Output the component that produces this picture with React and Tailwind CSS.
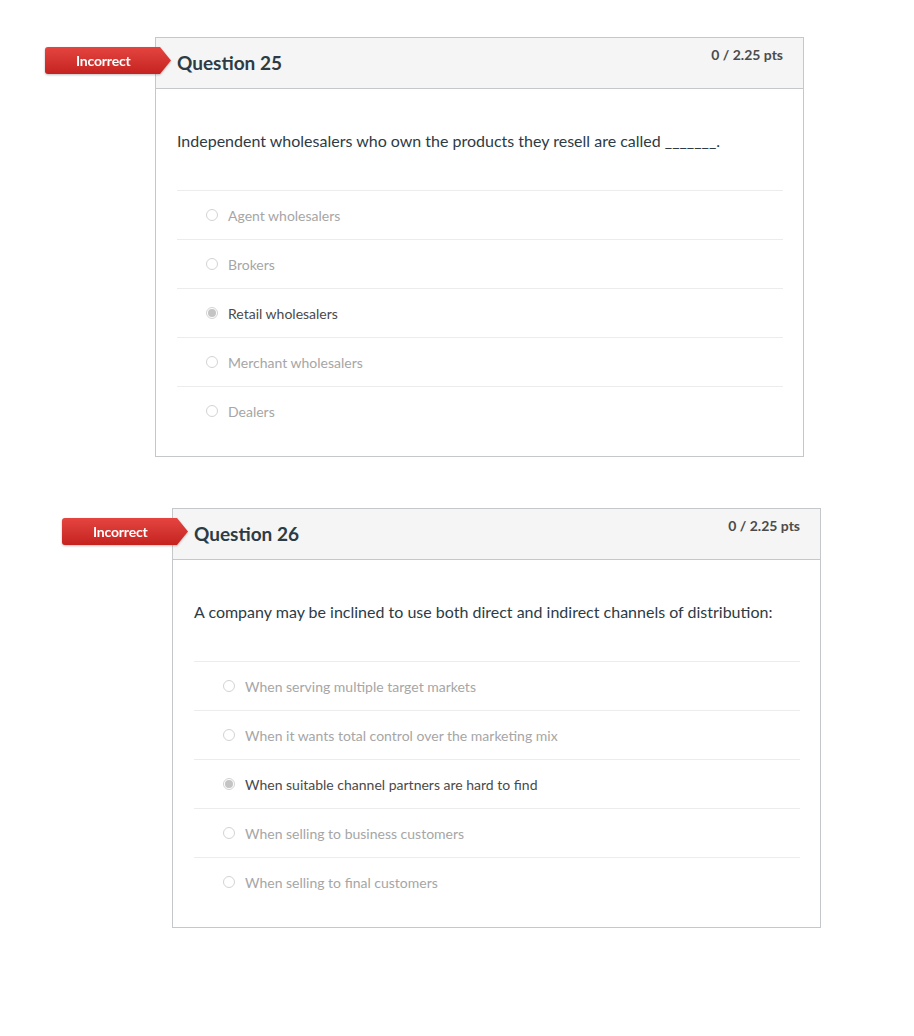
import React from 'react';

const QUESTIONS = [
  {
    id: 25,
    offset: 'ml-[155px] mt-[37px]',
    points: '0 / 2.25 pts',
    text: 'Independent wholesalers who own the products they resell are called _______.',
    answers: ['Agent wholesalers', 'Brokers', 'Retail wholesalers', 'Merchant wholesalers', 'Dealers'],
    selected: 2,
  },
  {
    id: 26,
    offset: 'ml-[172px] mt-[51px]',
    points: '0 / 2.25 pts',
    text: 'A company may be inclined to use both direct and indirect channels of distribution:',
    answers: [
      'When serving multiple target markets',
      'When it wants total control over the marketing mix',
      'When suitable channel partners are hard to find',
      'When selling to business customers',
      'When selling to final customers',
    ],
    selected: 2,
  },
];

// Red "Incorrect" flag that sticks out to the left of the card
const IncorrectFlag = () => (
  <div className="absolute left-[-111px] top-[9px] h-[27px] w-[126px] drop-shadow-[0_1px_1px_rgba(0,0,0,0.25)]">
    <div className="flex h-full w-full items-center pl-[31px] rounded-l-[3px] bg-gradient-to-b from-[#e5443f] to-[#c4221f] [clip-path:polygon(0_0,115px_0,126px_50%,115px_100%,0_100%)]">
      <span className="text-[14px] font-bold text-white leading-none tracking-[-0.2px]">Incorrect</span>
    </div>
  </div>
);

const Radio = ({ checked }) => (
  <span className="flex h-[12px] w-[12px] shrink-0 items-center justify-center rounded-full border border-[#d3d3d3] bg-white">
    {checked && <span className="h-[8px] w-[8px] rounded-full bg-[#c4c4c4]" />}
  </span>
);

const QuestionCard = ({ q }) => (
  <div className={`relative w-[649px] border border-[#c4c8cb] bg-white ${q.offset}`}>
    <IncorrectFlag />

    {/* Header */}
    <div className="flex h-[51px] items-start justify-between border-b border-[#c4c8cb] bg-[#f5f5f5] pl-[21px] pr-[20px]">
      <h2 className="mt-[13px] text-[19px] font-bold leading-[24px] text-[#2d3b45]">Question {q.id}</h2>
      <span className="mt-[8px] text-[14px] font-bold leading-[17px] text-[#4b4b4b]">{q.points}</span>
    </div>

    {/* Body */}
    <div className="pl-[21px] pr-[20px] pb-[21px]">
      <p className="pt-[41px] pb-[38px] text-[16px] leading-[22px] text-[#2d3b45]">{q.text}</p>
      <div>
        {q.answers.map((a, i) => (
          <div key={a} className="flex h-[49px] items-center gap-[10px] border-t border-[#ececec] pl-[29px]">
            <Radio checked={i === q.selected} />
            <span className={`text-[14px] leading-[17px] ${i === q.selected ? 'text-[#4a4a4a]' : 'text-[#a6a6a6]'}`}>{a}</span>
          </div>
        ))}
      </div>
    </div>
  </div>
);

export default function App() {
  return (
    <div className="min-h-[1036px] w-[914px] bg-white font-['Lato','Liberation_Sans',sans-serif]">
      {QUESTIONS.map((q) => (
        <QuestionCard key={q.id} q={q} />
      ))}
    </div>
  );
}
